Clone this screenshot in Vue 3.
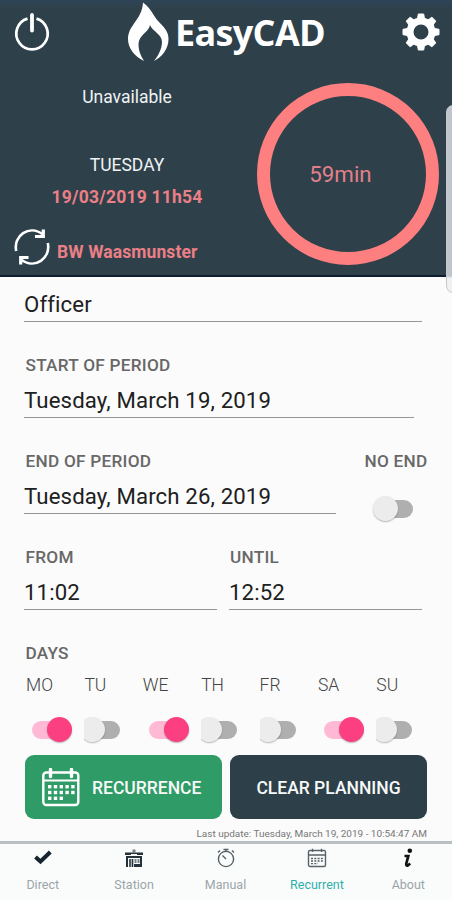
<script setup>
const days = [
  { name: 'MO', on: true },
  { name: 'TU', on: false },
  { name: 'WE', on: true },
  { name: 'TH', on: false },
  { name: 'FR', on: false },
  { name: 'SA', on: true },
  { name: 'SU', on: false },
]
const dots = []
for (let r = 0; r < 3; r++) {
  for (let c = 0; c < 5; c++) {
    if (r < 2 || c < 3) dots.push({ x: 6 + c * 5.8, y: 17 + r * 5.8 })
  }
}
const teeth = [0, 45, 90, 135, 180, 225, 270, 315]
</script>

<template>
  <div class="screen">
    <header class="header">
      <div class="topbar">
        <svg class="power" width="38" height="42" viewBox="0 0 38 42" fill="none" stroke="#fff">
          <path d="M14.500 8.600A15.700 15.700 0 1 0 23.500 8.600" stroke-width="2.700" />
          <path d="M19 5V20.500" stroke-width="3.800" stroke-linecap="round" />
        </svg>
        <div class="brand">
          <svg class="flame" width="42" height="60" viewBox="127 2 42 60" fill="#fff">
            <path d="M144 61C134 56 128 48 128 39C128 25 142 20 143 2.500C152 9 153 16 159 22C165 28 168.500 32 168.500 39C168.500 49 162 57 154 61C158 56 162 49 162 42C162 34 153 32 150 25C149 32 138.500 35 138.500 44C138.500 51 141 56 144 61Z" />
          </svg>
          <span class="brand-name">EasyCAD</span>
        </div>
        <svg class="gear" width="38" height="38" viewBox="-19 -19 38 38">
          <circle r="11" fill="none" stroke="#fff" stroke-width="7" />
          <path v-for="a in teeth" :key="a" :transform="`rotate(${a})`" d="M-3.700 -12L-2.700 -18H2.700L3.700 -12Z" fill="#fff" stroke="#fff" stroke-width="1" stroke-linejoin="round" />
        </svg>
      </div>
      <div class="status">
        <div class="info">
          <div class="state">Unavailable</div>
          <div class="weekday">TUESDAY</div>
          <div class="stamp">19/03/2019 11h54</div>
          <div class="station">
            <svg width="36" height="38" viewBox="0 0 36 38" fill="none" stroke="#fff" stroke-width="2.600">
              <path d="M2.200 23C-1 8 15-4 29 6.500" />
              <path d="M29.300 1.500V8.500H21" stroke-width="3.200" />
              <path d="M33.800 15C37 30 21 42 7 31.500" />
              <path d="M6.700 36.500V29.500H14.500" stroke-width="3.200" />
            </svg>
            <span>BW Waasmunster</span>
          </div>
        </div>
        <div class="ring"><span>59min</span></div>
      </div>
      <div class="edge-handle"></div>
    </header>

    <main class="form">
      <div class="value officer">Officer</div>

      <section class="group">
        <div class="label">START OF PERIOD</div>
        <div class="value start">Tuesday, March 19, 2019</div>
      </section>

      <section class="group split">
        <div class="end-col">
          <div class="label">END OF PERIOD</div>
          <div class="value">Tuesday, March 26, 2019</div>
        </div>
        <div class="no-end">
          <div class="label">NO END</div>
          <div class="switch"><i class="track"></i><i class="thumb"></i></div>
        </div>
      </section>

      <section class="group split times">
        <div class="time">
          <div class="label">FROM</div>
          <div class="value">11:02</div>
        </div>
        <div class="time">
          <div class="label">UNTIL</div>
          <div class="value">12:52</div>
        </div>
      </section>

      <section class="group days-group">
        <div class="label">DAYS</div>
        <div class="days">
          <div v-for="d in days" :key="d.name" class="day">
            <span class="day-name">{{ d.name }}</span>
            <div class="switch" :class="d.on ? 'on' : 'cut'"><i class="track"></i><i class="thumb"></i></div>
          </div>
        </div>
      </section>

      <div class="buttons">
        <button class="btn green">
          <svg width="38" height="39" viewBox="0 0 38 39" fill="none" stroke="#fff">
            <rect x="1.300" y="4.500" width="35" height="32.500" rx="3" stroke-width="2.400" />
            <path d="M1.300 12.500H36.300" stroke-width="2.200" />
            <path d="M8.500 1.500V8.500M29.500 1.500V8.500" stroke-width="3.400" stroke-linecap="round" />
            <rect v-for="(p, i) in dots" :key="i" :x="p.x" :y="p.y" width="3.400" height="3.400" fill="#fff" stroke="none" />
          </svg>
          <span>RECURRENCE</span>
        </button>
        <button class="btn dark"><span>CLEAR PLANNING</span></button>
      </div>
      <div class="updated">Last update: Tuesday, March 19, 2019 - 10:54:47 AM</div>
    </main>

    <nav class="tabs">
      <div class="tab">
        <svg width="20" height="20" viewBox="0 0 20 20" fill="none" stroke="#15242e"><path d="M2.500 9L7.500 13.500L17.300 4" stroke-width="4" /></svg>
        <span>Direct</span>
      </div>
      <div class="tab">
        <svg width="20" height="20" viewBox="0 0 20 20" fill="#25323a">
          <path d="M1 4.500H7V7H1ZM13 4.500H19V7H13ZM7 4.500H13V6H7Z" />
          <path d="M8.500 1.500H11.500V5H8.500Z" fill="#77818a" />
          <path d="M2 8H18V19H16V10H4V19H2ZM5.200 11H6.800V19H5.200ZM7.600 11H9.300V19H7.600ZM10 16H17V19H10Z" />
          <path d="M10.500 11H12.500V15H10.500ZM13.500 11H15.500V15H13.500Z" fill="#77818a" />
        </svg>
        <span>Station</span>
      </div>
      <div class="tab">
        <svg width="20" height="20" viewBox="0 0 20 20" fill="none" stroke="#555e63" stroke-width="1.400">
          <circle cx="10" cy="11" r="7.600" />
          <path d="M10 11L6.500 7.500M10 3.400V1.500M7.500 1.500H12.500M2 4.500L4 2.500M16 2.500L18 4.500" />
        </svg>
        <span>Manual</span>
      </div>
      <div class="tab active">
        <svg width="20" height="20" viewBox="0 0 20 20" fill="none" stroke="#596267" stroke-width="1.400">
          <rect x="1.500" y="2.500" width="17" height="16" rx="1.500" />
          <path d="M1.500 7H18.500M5.500 .8V4M14.500 .8V4" />
          <path d="M4 10.500H16M4 13H16M4 15.700H11" stroke-width="1.300" stroke-dasharray="2 1.300" />
        </svg>
        <span>Recurrent</span>
      </div>
      <div class="tab">
        <svg width="20" height="20" viewBox="0 0 20 20" fill="none" stroke="#111">
          <circle cx="11.800" cy="2.800" r="2.300" fill="#111" stroke="none" />
          <path d="M6.500 8H10.300L8.200 16Q8 18 10 17.400L12.200 15.500" stroke-width="2.700" />
        </svg>
        <span>About</span>
      </div>
    </nav>
  </div>
</template>

<style>
body {
  margin: 0;
}
</style>

<style scoped>
.screen {
  width: 452px;
  height: 900px;
  display: flex;
  flex-direction: column;
  background: #fbfbfb;
  font-family: Roboto, sans-serif;
  overflow: hidden;
  white-space: nowrap;
}
svg {
  display: block;
  flex: none;
}
.header {
  position: relative;
  box-sizing: border-box;
  height: 277px;
  background: linear-gradient(#2f4458, #2e414b 8px);
  border-bottom: 2px solid #101d30;
}
.topbar {
  display: flex;
  justify-content: space-between;
  align-items: flex-start;
  height: 66px;
  padding: 0 12px 0 13px;
}
.power {
  margin-top: 10px;
}
.brand {
  display: flex;
  padding-right: 1px;
}
.flame {
  margin-top: 2px;
}
.brand-name {
  margin: 8px 0 0 6px;
  font: 700 36px/50px "Open Sans", sans-serif;
  letter-spacing: -0.650px;
  color: #fff;
}
.gear {
  margin-top: 13px;
}
.status {
  display: flex;
}
.info {
  box-sizing: border-box;
  width: 257px;
  padding-right: 3px;
  color: #f0f3f4;
  text-align: center;
}
.state {
  margin-top: 21px;
  font-size: 17.500px;
  line-height: 20px;
}
.weekday {
  margin-top: 48px;
  font-size: 17.500px;
  line-height: 20px;
}
.stamp {
  margin-top: 12px;
  font-size: 17.500px;
  font-weight: 700;
  line-height: 20px;
  letter-spacing: 0.220px;
  color: #eb7f86;
}
.station {
  display: flex;
  align-items: center;
  gap: 7px;
  margin: 21px 0 0 14px;
  font-size: 17.500px;
  font-weight: 700;
  letter-spacing: 0.100px;
  color: #eb7f86;
}
.station span {
  margin-top: 10px;
}
.ring {
  display: flex;
  align-items: center;
  justify-content: center;
  box-sizing: border-box;
  width: 182px;
  height: 182px;
  margin-top: 17px;
  padding-right: 15px;
  border: 13px solid #fe7f7f;
  border-radius: 50%;
  font-size: 22.300px;
  color: #e2808a;
}
.edge-handle {
  position: absolute;
  top: 105px;
  right: -8px;
  width: 12px;
  height: 186px;
  border: 1px solid #c5c9cc;
  border-radius: 7px;
  background: linear-gradient(#c0c6cb 170px, #f0f1f2 172px);
}
.form {
  height: 564px;
}
.value {
  box-sizing: border-box;
  height: 36px;
  border-bottom: 1.500px solid #979797;
  font-size: 22.200px;
  line-height: 36px;
  color: #202020;
  letter-spacing: 0.130px;
}
.officer {
  width: 398px;
  height: 34px;
  margin: 11px 0 0 24px;
  line-height: 33px;
}
.group {
  height: 96px;
  padding-left: 24px;
  box-sizing: border-box;
  padding-top: 33px;
}
.label {
  padding-left: 1.500px;
  font-size: 17.200px;
  font-weight: 500;
  line-height: 20px;
  letter-spacing: 0.260px;
  color: #686868;
}
.group .value {
  margin-top: 7px;
}
.start {
  width: 390px;
}
.split {
  display: flex;
}
.end-col {
  width: 312px;
}
.no-end {
  margin-left: 27px;
}
.no-end .switch {
  margin: 24px 0 0 9px;
}
.times {
  gap: 12px;
}
.time {
  width: 193px;
}
.time + .time .label {
  padding-left: 1px;
}
.days-group {
  height: 146px;
}
.days {
  display: flex;
  padding: 12px 0 0 2px;
}
.day {
  width: 58.400px;
}
.day-name {
  display: block;
  font-size: 17.500px;
  font-weight: 300;
  line-height: 20px;
  color: #444;
}
.day .switch {
  margin-top: 21px;
}
.switch {
  position: relative;
  width: 41px;
  height: 28px;
}
.track {
  position: absolute;
  left: 5px;
  top: 5px;
  width: 36px;
  height: 18px;
  border-radius: 9px;
  background: #afafaf;
}
.thumb {
  position: absolute;
  left: 1px;
  top: 1px;
  width: 25px;
  height: 25px;
  border-radius: 50%;
  background: #ececec;
  box-shadow: 0 1px 1.500px rgba(0, 0, 0, 0.28);
}
.on {
  left: 6px;
}
.on .track {
  left: 0;
  background: #ffb9d4;
}
.on .thumb {
  left: 15px;
  background: #fb3f80;
}
.cut {
  overflow: hidden;
  width: 37px;
}
.cut .track {
  left: 0;
  width: 36px;
}
.cut .thumb {
  left: -4px;
}
.buttons {
  display: grid;
  grid-template-columns: 197px 197px;
  gap: 8px;
  padding: 0 25px;
  margin-top: -1px;
}
.btn {
  display: flex;
  box-sizing: border-box;
  align-items: center;
  justify-content: center;
  height: 64px;
  padding: 0;
  border: 0;
  border-radius: 9px;
  font: 500 17.500px/22px Roboto, sans-serif;
  color: #f7f9f9;
}
.btn span {
  margin-top: 2px;
}
.green {
  justify-content: flex-start;
  gap: 12px;
  padding-left: 17px;
  background: #2f9b66;
}
.dark {
  background: #2d404a;
}
.updated {
  margin: 9px 25px 0 0;
  font-size: 9.980px;
  line-height: 12px;
  text-align: right;
  color: #777;
}
.tabs {
  display: flex;
  box-sizing: border-box;
  height: 59px;
  padding: 5px 0 0;
  margin: 0 -2px 0 -3px;
  border-top: 3px solid #b9c0c1;
  background: #fafcfc;
}
.tab {
  display: flex;
  flex: 1 0 0;
  flex-direction: column;
  align-items: center;
  gap: 10px;
  font-size: 12.500px;
  line-height: 14px;
  color: #9ba5a8;
}
.tab svg {
  margin-top: -1px;
}
.active {
  color: #2eb0aa;
}
</style>
